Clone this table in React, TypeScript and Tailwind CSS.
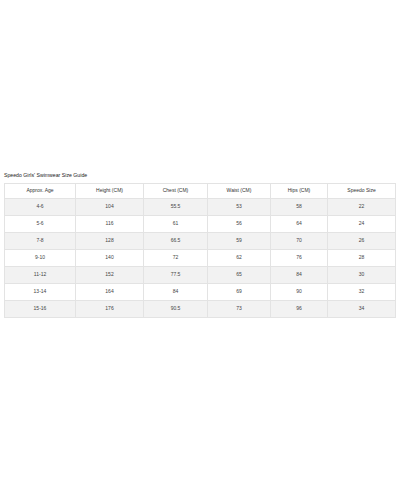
import React from 'react';

const rows = [
  ['4-6', '104', '55.5', '53', '58', '22'],
  ['5-6', '116', '61', '56', '64', '24'],
  ['7-8', '128', '66.5', '59', '70', '26'],
  ['9-10', '140', '72', '62', '76', '28'],
  ['11-12', '152', '77.5', '65', '84', '30'],
  ['13-14', '164', '84', '69', '90', '32'],
  ['15-16', '176', '90.5', '73', '96', '34'],
];

const headers = ['Approx. Age', 'Height (CM)', 'Chest (CM)', 'Waist (CM)', 'Hips (CM)', 'Speedo Size'];
const widths = ['w-[71px]', 'w-[68px]', 'w-[64px]', 'w-[63px]', 'w-[57px]', 'w-[68px]'];

const App = () => {
  return (
    <div className="w-[400px] h-[500px] bg-white font-['Liberation_Sans',Arial,sans-serif] text-[#333]">
      <div className="pt-[172px] px-[4px]">
        <p className="text-[5.2px] leading-[6px] mb-[5px] text-[#222]">Speedo Girls' Swimwear Size Guide</p>
        <table className="w-[391px] border-collapse table-fixed">
          <colgroup>
            {widths.map((w, i) => (
              <col key={i} className={w} />
            ))}
          </colgroup>
          <thead>
            <tr className="h-[15px] bg-white">
              {headers.map((h) => (
                <th key={h} className="border border-[#e3e3e3] font-normal text-[5px] text-center p-0">
                  {h}
                </th>
              ))}
            </tr>
          </thead>
          <tbody>
            {rows.map((r, i) => (
              <tr key={i} className={i % 2 === 0 ? 'h-[17px] bg-[#f2f2f2]' : 'h-[17px] bg-white'}>
                {r.map((c, j) => (
                  <td key={j} className="border border-[#e3e3e3] text-[5px] text-center p-0 text-[#444]">
                    {c}
                  </td>
                ))}
              </tr>
            ))}
          </tbody>
        </table>
      </div>
    </div>
  );
};

export default App;
